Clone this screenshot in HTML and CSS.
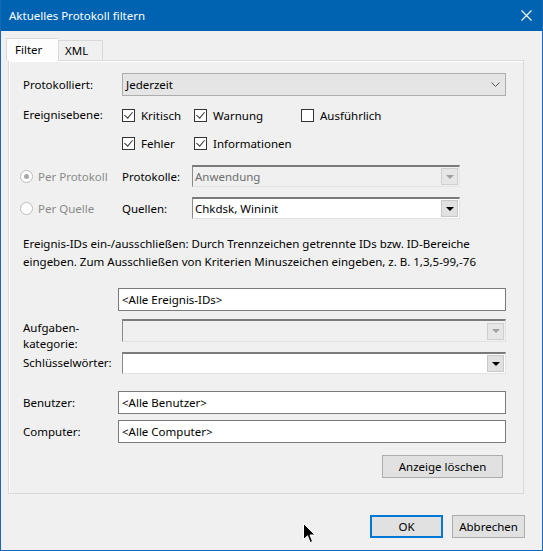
FILE: index.html
```html
<!DOCTYPE html>
<html lang="de">
<head>
<meta charset="utf-8">
<title>Aktuelles Protokoll filtern</title>
<link rel="stylesheet" href="styles.css">
</head>
<body>
<div class="window">
  <div class="titlebar">
    <span class="title">Aktuelles Protokoll filtern</span>
    <svg class="close" width="11" height="11" viewBox="0 0 11 11"><path d="M0.5 0.5 L10.5 10.5 M10.5 0.5 L0.5 10.5" stroke="#fff" stroke-width="1.1" fill="none"/></svg>
  </div>
  <div class="body">
    <div class="tabs">
      <div class="tab active">Filter</div>
      <div class="tab">XML</div>
    </div>
    <div class="panel">
      <div class="row r-logged">
        <div class="label">Protokolliert:</div>
        <div class="modern-combo"><span>Jederzeit</span>
          <svg width="9" height="5" viewBox="0 0 9 5"><path d="M0.5 0.5 L4.5 4.5 L8.5 0.5" stroke="#555" fill="none"/></svg>
        </div>
      </div>
      <div class="row r-level">
        <div class="label">Ereignisebene:</div>
        <div class="checks">
          <label class="check"><span class="box on"></span>Kritisch</label>
          <label class="check"><span class="box on"></span>Warnung</label>
          <label class="check"><span class="box"></span>Ausführlich</label>
          <label class="check"><span class="box on"></span>Fehler</label>
          <label class="check"><span class="box on"></span>Informationen</label>
        </div>
      </div>
      <div class="row r-radio r-proto">
        <div class="radio-col"><span class="radio checked"></span><span class="dim">Per Protokoll</span></div>
        <div class="sublabel">Protokolle:</div>
        <div class="classic-combo disabled"><span>Anwendung</span><span class="drop"><i></i></span></div>
      </div>
      <div class="row r-radio r-source">
        <div class="radio-col"><span class="radio"></span><span class="dim">Per Quelle</span></div>
        <div class="sublabel">Quellen:</div>
        <div class="classic-combo"><span>Chkdsk, Wininit</span><span class="drop"><i></i></span></div>
      </div>
      <p class="hint">Ereignis-IDs ein-/ausschließen: Durch Trennzeichen getrennte IDs bzw. ID-Bereiche<br>eingeben. Zum Ausschließen von Kriterien Minuszeichen eingeben, z. B. 1,3,5-99,-76</p>
      <div class="row r-ids">
        <div class="textbox">&lt;Alle Ereignis-IDs&gt;</div>
      </div>
      <div class="row r-task">
        <div class="label two">Aufgaben-<br>kategorie:</div>
        <div class="classic-combo wide disabled"><span></span><span class="drop"><i></i></span></div>
      </div>
      <div class="row r-keys">
        <div class="label">Schlüsselwörter:</div>
        <div class="classic-combo wide"><span></span><span class="drop"><i></i></span></div>
      </div>
      <div class="row r-user">
        <div class="label short">Benutzer:</div>
        <div class="textbox">&lt;Alle Benutzer&gt;</div>
      </div>
      <div class="row r-comp">
        <div class="label short">Computer:</div>
        <div class="textbox">&lt;Alle Computer&gt;</div>
      </div>
      <div class="row r-clear">
        <button class="btn clear">Anzeige löschen</button>
      </div>
    </div>
    <div class="footer">
      <button class="btn ok">OK</button>
      <button class="btn">Abbrechen</button>
    </div>
  </div>
  <svg class="cursor" width="13" height="21" viewBox="0 0 13 21"><path d="M0.5 0.5 L0.5 16.5 L4.5 12.8 L7.2 19.5 L9.6 18.5 L7 12 L12 12 Z" fill="#000" stroke="#fff" stroke-width="1"/></svg>
</div>
</body>
</html>
```
FILE: styles.css
```css
html, body {
  margin: 0;
  padding: 0;
  background: #f0f0f0;
}
body {
  font-family: "Noto Sans", "Open Sans", sans-serif;
  font-size: 11.5px;
  color: #000;
}
.window {
  position: relative;
  width: 543px;
  height: 551px;
  box-sizing: border-box;
  border: 1px solid #1769b5;
  border-top: none;
  background: #f0f0f0;
  display: flex;
  flex-direction: column;
  overflow: hidden;
}
.titlebar {
  height: 31px;
  flex: none;
  background: #0063b1;
  color: #fff;
  display: flex;
  align-items: center;
  justify-content: space-between;
  padding: 0 11px 0 9px;
  margin: 0 -1px;
}
.title {
  font-size: 11.5px;
  line-height: 16px;
}
.close {
  display: block;
}
.body {
  flex: 1;
  padding: 7px 18px 0 7px;
  display: flex;
  flex-direction: column;
}
.tabs {
  display: flex;
  height: 22px;
  margin-left: -2px;
  align-items: flex-end;
}
.tab {
  box-sizing: border-box;
  height: 20px;
  padding: 0 0 0 6px;
  width: 45px;
  border: 1px solid #d9d9d9;
  border-bottom: none;
  background: #f0f0f0;
  line-height: 19px;
}
.tab.active {
  height: 23px;
  width: 52px;
  margin-bottom: -1px;
  padding-left: 8px;
  background: #fdfdfd;
  border-right: none;
  position: relative;
  z-index: 1;
  line-height: 21px;
}
.panel {
  box-sizing: border-box;
  height: 434px;
  border: 1px solid #d9d9d9;
  box-shadow: inset 1px 1px 0 #fff;
  padding: 0 0 0 14px;
  display: flex;
  flex-direction: column;
}
.row {
  display: flex;
  align-items: center;
}
.label {
  width: 99px;
  flex: none;
  line-height: 16px;
}
.label.short {
  width: 95px;
}
.r-logged { margin-top: 12px; }
.modern-combo {
  box-sizing: border-box;
  width: 384px;
  height: 23px;
  background: #e5e5e5;
  border: 1px solid #adadad;
  display: flex;
  align-items: center;
  justify-content: space-between;
  padding: 0 5px 0 3px;
}
.r-level {
  margin-top: 9px;
  align-items: flex-start;
}
.r-level .label {
  line-height: 20px;
}
.checks {
  display: grid;
  grid-template-columns: 72px 107px auto;
  grid-template-rows: 20px 20px;
  row-gap: 8px;
}
.check {
  display: flex;
  align-items: center;
  gap: 6px;
}
.box {
  width: 13px;
  height: 13px;
  box-sizing: border-box;
  border: 1px solid #333;
  background: #fff;
  flex: none;
  position: relative;
}
.box.on::after {
  content: "";
  position: absolute;
  left: 3px;
  top: 0px;
  width: 4px;
  height: 7px;
  border: solid #333;
  border-width: 0 1px 1px 0;
  transform: rotate(40deg);
}
.r-radio { height: 22px; }
.r-proto { margin-top: 12px; }
.r-source { margin-top: 10px; }
.radio-col {
  width: 102px;
  margin-left: -3px;
  display: flex;
  align-items: center;
  gap: 5px;
  flex: none;
}
.radio {
  width: 13px;
  height: 13px;
  box-sizing: border-box;
  border: 1px solid #bcbcbc;
  border-radius: 50%;
  background: #fff;
  position: relative;
}
.radio.checked::after {
  content: "";
  position: absolute;
  left: 3px;
  top: 3px;
  width: 5px;
  height: 5px;
  border-radius: 50%;
  background: #a8a8a8;
}
.dim { color: #8a8a8a; }
.sublabel {
  width: 70px;
  flex: none;
}
.classic-combo {
  box-sizing: border-box;
  width: 268px;
  height: 22px;
  background: #fff;
  border-style: solid;
  border-width: 2px 1px 1px 1px;
  border-color: #7a7a7a #e3e3e3 #e3e3e3 #8a8a8a;
  display: flex;
  align-items: center;
  justify-content: space-between;
  padding: 0 1px 0 2px;
}
.classic-combo.wide {
  width: 384px;
  height: 23px;
}
.classic-combo.disabled {
  background: #f0f0f0;
  color: #6d6d6d;
}
.drop {
  width: 17px;
  height: 17px;
  box-sizing: border-box;
  background: #e1e1e1;
  border: 1px solid #c8c8c8;
  display: flex;
  align-items: center;
  justify-content: center;
}
.drop i {
  width: 0;
  height: 0;
  border-left: 4px solid transparent;
  border-right: 4px solid transparent;
  border-top: 4px solid #000;
}
.disabled .drop {
  background: #e6e6e6;
  border-color: #cfcfcf;
}
.disabled .drop i {
  border-top-color: #a0a0a0;
}
.hint {
  margin: 16px 0 0 0;
  line-height: 18px;
  white-space: nowrap;
}
.textbox {
  box-sizing: border-box;
  width: 388px;
  height: 23px;
  background: #fff;
  border: 1px solid #7a7a7a;
  padding: 0 3px;
  line-height: 21px;
}
.r-ids { margin-top: 17px; padding-left: 95px; }
.r-task {
  margin-top: 8px;
  height: 23px;
  align-items: flex-start;
}
.r-task .label {
  line-height: 16px;
  margin-top: 1px;
}
.r-keys { margin-top: 10px; }
.r-keys .classic-combo { height: 22px; }
.r-user { margin-top: 17px; }
.r-comp { margin-top: 6px; }
.r-clear {
  margin-top: 12px;
  justify-content: flex-end;
  padding-right: 20px;
}
.btn {
  box-sizing: border-box;
  width: 73px;
  height: 23px;
  background: #e1e1e1;
  border: 1px solid #adadad;
  font-family: inherit;
  font-size: 11.5px;
  color: #000;
  padding: 0;
  margin: 0;
}
.btn.clear { width: 121px; }
.btn.ok { border: 2px solid #0078d7; }
.footer {
  display: flex;
  justify-content: flex-end;
  gap: 9px;
  margin-top: 21px;
  margin-right: -1px;
}
.cursor {
  position: absolute;
  left: 302px;
  top: 523px;
}
```
